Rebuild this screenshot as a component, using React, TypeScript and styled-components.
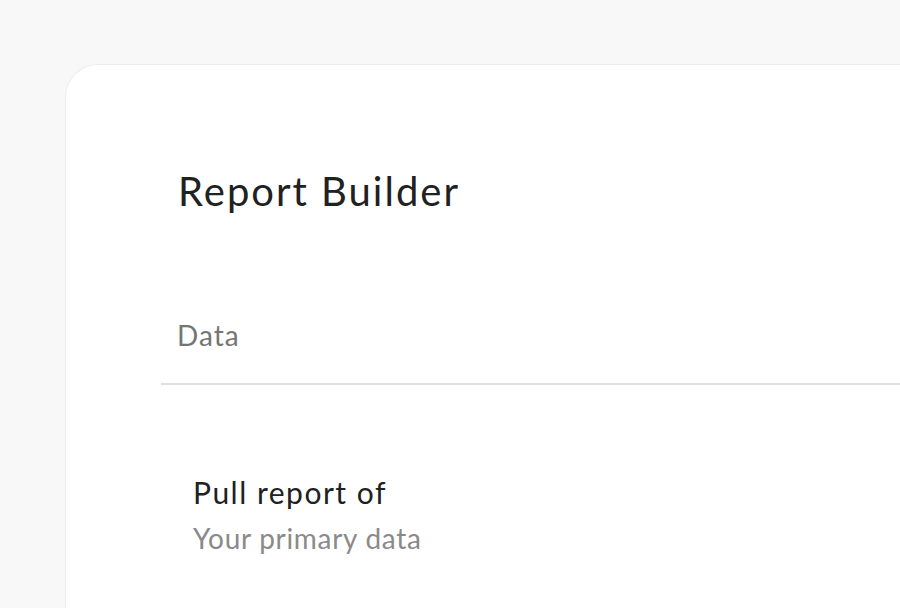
import styled, { createGlobalStyle } from "styled-components";

const GlobalStyle = createGlobalStyle`
  html, body {
    margin: 0;
    padding: 0;
    background: #f8f8f8;
    font-family: Lato, "Open Sans", sans-serif;
    overflow: hidden;
  }
`;

export default function App() {
  return (
    <>
      <GlobalStyle />
      <Page>
        <Card>
          <Header>
            <Title>Report Builder</Title>
          </Header>
          <Tabs>
            <Tab>Data</Tab>
          </Tabs>
          <Section>
            <FieldLabel>Pull report of</FieldLabel>
            <FieldValue>Your primary data</FieldValue>
          </Section>
        </Card>
      </Page>
    </>
  );
}

const Page = styled.div`
  width: 900px;
  height: 608px;
  padding: 64px 0 0 65px;
  box-sizing: border-box;
  overflow: hidden;
`;

const Card = styled.div`
  background: #ffffff;
  border: 1px solid #ececec;
  border-right: none;
  border-bottom: none;
  border-top-left-radius: 33px;
  padding-left: 95px;
  height: 544px;
  box-sizing: border-box;
`;

const Header = styled.div`
  padding: 102px 0 0 17px;
  height: 200px;
  box-sizing: border-box;
`;

const Title = styled.h1`
  margin: 0;
  font-size: 40px;
  font-weight: 400;
  line-height: 48px;
  letter-spacing: 2px;
  color: #212121;
`;

const Tabs = styled.div`
  border-bottom: 2px solid #e0e0e0;
  padding: 22px 16px 0;
  height: 120px;
  display: flex;
  align-items: center;
  box-sizing: border-box;
`;

const Tab = styled.div`
  font-size: 28px;
  letter-spacing: 1px;
  color: #757575;
`;

const Section = styled.div`
  padding: 87px 32px 0;
`;

const FieldLabel = styled.div`
  font-size: 30px;
  color: #212121;
  line-height: 40px;
  letter-spacing: 1.5px;
`;

const FieldValue = styled.div`
  margin-top: 6px;
  font-size: 28px;
  color: #8a8a8a;
  line-height: 40px;
  letter-spacing: 0.7px;
`;
